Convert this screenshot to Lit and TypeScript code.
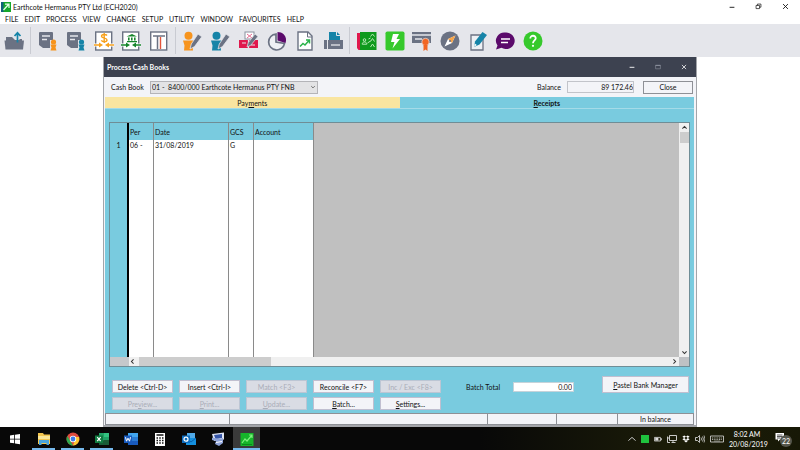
import { LitElement, html, css, svg, nothing, TemplateResult } from "lit";
import { customElement, property } from "lit/decorators.js";
import { classMap } from "lit/directives/class-map.js";

const doc = svg`<path d="M1.500 1h12.500q1 0 1 1v15H5l-4-3V2z" fill="#6b7283"/><path d="M4 5h8M4 8.500h5" stroke="#e5e6eb" stroke-width="1.400"/>`;
const person = (x: number, y: number, c: string) => svg`
  <circle cx=${x} cy=${y} r="2.600" fill=${c}/><path d="M${x - 3} ${y + 2.5}h6l-1 3 1 3h-6l1-3z" fill=${c}/>`;
const editor = (c: string) => svg`
  <circle cx="5.500" cy="4.800" r="4" fill=${c}/><path d="M0 9.500h11l-1.500 5 .5 5H1l.5-5z" fill=${c}/>
  <path d="M7 18l1.300-5L15 3l3.800 2.800-7.300 9.800z" fill="#6b7283" stroke="#e5e6eb" stroke-width=".8"/>`;
const sheet = svg`<rect x="1.700" y="1" width="16" height="18" fill="#fff" stroke="#6b7283" stroke-width="1.400"/>`;
const arrows = (c: string) => svg`<path d="M0 12.500h20v3H0z" fill="#fff"/><path d="M0 14h6M14 14h6" stroke=${c} stroke-width="1.600"/>
  <path d="M5 11.500l4 2.500-4 2.500zM15 11.500l-4 2.500 4 2.500z" fill=${c}/>`;

const icons: Record<string, TemplateResult> = {
  open: svg`<path d="M2 6h6l2 2h8v3H2z" fill="#6b7283"/><path d="M10.500 6h5v3h-5z" fill="#e5e6eb"/><path d="M.5 9.500h19.500l-1 9H1.500z" fill="#6b7283"/><path d="M13.500 11.500V3M10.500 5l3-3.200 3 3.200" fill="none" stroke="#1684a8" stroke-width="1.700"/>`,
  customerDoc: svg`${doc}<path d="M12 9h8v10h-8z" fill="#e5e6eb"/>${person(15.5, 11, "#f7941d")}`,
  supplierDoc: svg`${doc}<path d="M12 9h8v10h-8z" fill="#e5e6eb"/>${person(15.5, 11, "#1684a8")}`,
  cash: svg`${sheet}${arrows("#f7a11d")}<path d="M13 4.500C12 3 7.500 3 7.500 5.300s5.500 1.400 5.500 3.700-4.500 2.200-5.700.4M10.200 2v10" fill="none" stroke="#f7a11d" stroke-width="1.400"/>`,
  bank: svg`${sheet}${arrows("#16852b")}<path d="M5.500 5.600L11 3l5 2.600zM7 6.500h1.600v3H7zM10 6.500h1.600v3H10zM13 6.500h1.600v3H13zM6 10h10v1.300H6z" fill="#16852b"/>`,
  ledger: svg`${sheet}<path d="M4 5h12M8.500 5v13" stroke="#6b7283" stroke-width="1.500"/><path d="M11.500 6v12" stroke="#e4543a" stroke-width="1.400"/>`,
  customerEdit: editor("#f7941d"),
  supplierEdit: editor("#1684a8"),
  stockEdit: svg`<rect x="6" y="1" width="9" height="7" fill="#fff" stroke="#8c91a0"/><path d="M8 3l5 4M13 3L8 7" stroke="#e86a91" stroke-width="1"/><path d="M0 9h19v8H0z" fill="#e0184d"/><path d="M9.500 9v8M3 12h4M12 14h4" stroke="#e5e6eb" stroke-width="1.200"/><path d="M8 16l1.300-4.400L16 3l3 2.400-7.200 8.800z" fill="#6b7283" stroke="#e5e6eb" stroke-width=".7"/>`,
  pie: svg`<path d="M9 3a8 8 0 1 0 8.500 9.500L9 11z" fill="#eef0f4" stroke="#6b7283" stroke-width="1.700"/><path d="M10.500 1v8.500l8 2.500C20.500 6 16.500 1 10.500 1z" fill="#5b0a6b"/>`,
  report: svg`<path d="M3 1h10l4 4v14H3z" fill="#fff" stroke="#6b7283" stroke-width="1.400"/><path d="M12.500 1v5H17" fill="none" stroke="#6b7283"/><path d="M5 15.500l3-3 2 1.500 4-4.500M11 9h3.500v3.500" fill="none" stroke="#2ab34a" stroke-width="1.500"/>`,
  print: svg`<path d="M6 1h8l3 3v6H6z" fill="#1684a8"/><path d="M13.500 1v3.500H17" fill="none" stroke="#e5e6eb"/><path d="M1 9h3v9H1zM5 9h15v9H5z" fill="#6b7283"/><path d="M8 14h9" stroke="#e5e6eb" stroke-width="1.300"/>`,
  contacts: svg`<path d="M0 2h4v17H1.500L0 17z" fill="#e0184d"/><path d="M3 1h16.500v18H3z" fill="#0f9a1e"/><g fill="none" stroke="#b6e8b5"><circle cx="7.500" cy="9" r="1.300"/><path d="M5.200 13.200c0-3 4.600-3 4.600 0zM10.500 12l3-2M13.500 5.500l2-2.500 2 2.500M13.500 10.500l2-3 2 3M13.500 16l2-3 2 3M11.500 8l2-1"/></g>`,
  bolt: svg`<rect x=".5" y=".5" width="19" height="19" rx="1.800" fill="#36c92c"/><path d="M8 3h6l-2.500 5H15L7.500 17.500 9.500 11H6z" fill="#fff"/>`,
  licence: svg`<path d="M0 1h19v11H0z" fill="#6b7283"/><path d="M0 4h19M3 8h7" stroke="#e5e6eb" stroke-width="1.300"/><circle cx="13.500" cy="11" r="3.700" fill="#f26522" stroke="#e5e6eb" stroke-width=".7"/><path d="M11.500 14h4v6l-2-1.500-2 1.500z" fill="#f26522"/>`,
  compass: svg`<circle cx="10" cy="10" r="9.500" fill="#6b7283"/><path d="M15.500 4.500L12 12l-7.500 3.500L8 8z" fill="#fff"/><path d="M15.500 4.500L12 12 8 8z" fill="#f7a54a"/><circle cx="10" cy="10" r="1.100" fill="#6b7283"/>`,
  note: svg`<path d="M3 4h12v15H3z" fill="#eef0f4" stroke="#6b7283" stroke-width="1.300"/><path d="M6 16l1-5.500L14.500 1 19 4l-7.500 9.500z" fill="#1684a8"/><path d="M6 16l.8-3.500 2 1.600z" fill="#fff"/>`,
  chat: svg`<path d="M10.500 1.500a8.600 8.300 0 1 1-4 15.300L1 18.500l1.500-4A8.500 8.300 0 0 1 10.500 1.500z" fill="#5b0a6b"/><path d="M6 8h9M6 11.500h7" stroke="#fff" stroke-width="1.300"/>`,
  help: svg`<circle cx="10" cy="10" r="9.500" fill="#36c92c"/><path d="M7.300 7.500c0-3.800 5.700-3.500 5.400 0-.2 2-2.700 2-2.700 4.700" fill="none" stroke="#fff" stroke-width="1.800"/><circle cx="10" cy="14.800" r="1.100" fill="#fff"/>`,

  windows: svg`<path d="M5 6.500l4.200-.7v3.900H5zM10 5.700l5-.8v4.800h-5zM5 10.400h4.200v3.900L5 13.700zM10 10.400h5v4.800l-5-.8z" fill="#fff"/>`,
  folder: svg`<path d="M4 4h5l1 1.500h6V15H4z" fill="#f3c64f"/><path d="M4 7h12v3H4z" fill="#fbe79a"/><path d="M5 11h10v5h-2.500v-2h-5v2H5z" fill="#4aa5dc"/>`,
  chrome: svg`<circle cx="10" cy="10" r="6.500" fill="#dd4b3e"/><path d="M4.300 7L10 16.500A6.500 6.500 0 0 1 4.300 7z" fill="#2da94f"/><path d="M10 16.500L13 8h3a6.500 6.500 0 0 1-6 8.500z" fill="#fcc934"/><circle cx="10" cy="10" r="3.200" fill="#fff"/><circle cx="10" cy="10" r="2.400" fill="#3f7de8"/>`,
  excel: svg`<path d="M7 4h10v12H7z" fill="#21a366"/><path d="M12 4h5v4h-5z" fill="#33c481"/><path d="M12 11h5v5H7v-2z" fill="#185c37"/><path d="M3 6.500h8v7.500H3z" fill="#107c41"/><path d="M5.200 8.200l3.500 4M8.700 8.200l-3.500 4" stroke="#fff" stroke-width="1.200"/>`,
  word: svg`<path d="M7 4h10v12H7z" fill="#2b7cd3"/><path d="M7 4h10v4H7z" fill="#41a5ee"/><path d="M7 12h10v4H7z" fill="#185abd"/><path d="M3 6.500h8v7.500H3z" fill="#185abd"/><path d="M4.500 8.200l1 4 1.500-3 1.500 3 1-4" fill="none" stroke="#fff"/>`,
  calc: svg`<path d="M5 4h10v13H5z" fill="#fff"/><path d="M6.500 6h7" stroke="#111" stroke-width="1.500"/><path d="M6.500 9h7M6.500 11.500h7M6.500 14h7" stroke="#111" stroke-width="1.300" stroke-dasharray="1.500 1.250"/>`,
  outlook: svg`<path d="M8 4h8v6H8z" fill="#50a9e8"/><path d="M7 9h10v7H7z" fill="#1490df"/><path d="M7 9l5 4 5-4" fill="none" stroke="#0a5ea8"/><path d="M3 6.500h8v7.500H3z" fill="#0f6cbd"/><circle cx="7" cy="10.200" r="2" fill="none" stroke="#fff" stroke-width="1.200"/>`,
  remote: svg`<path d="M4 5l12-1.500v7L6 12z" fill="#dfe5f3"/><path d="M6 6l8-1v4L7.500 10z" fill="#3555a8"/><path d="M4 8.500l7 1.500 4-1v5l-4 3-4-2 1-3-4-1z" fill="#8fa4d8"/><path d="M8 13.500l6-1" stroke="#fff"/>`,
  pastel: svg`<path d="M3.500 4h13v13h-13z" fill="#16b52a"/><path d="M5 14l3-4 2 2 5-6M12 6h3v3" fill="none" stroke="#7cf07b" stroke-width="1.200"/><path d="M5 15.500h10" stroke="#0b8a1b"/>`,

  logo: svg`<path d="M0 0h20v20H0z" fill="#17a82b"/><path d="M0 0h5v20H0z" fill="#12617c"/><path d="M5 16L15 5M8 4h8v8" fill="none" stroke="#e6ffe6" stroke-width="2.500"/>`,
  min: svg`<path d="M2 11h16" stroke="currentColor" stroke-width="3"/>`,
  restore: svg`<path d="M3 7h10v9H3zM7 7V3h10v9h-4" fill="none" stroke="currentColor" stroke-width="2"/>`,
  max: svg`<path d="M2 4h16v12H2z" fill="none" stroke="currentColor" stroke-width="2"/><path d="M2 5h16" stroke="currentColor" stroke-width="3"/>`,
  close: svg`<path d="M3 3l14 14M17 3L3 17" stroke="currentColor" stroke-width="2.500"/>`,
  up: svg`<path d="M4 13l6-6 6 6" fill="none" stroke="currentColor" stroke-width="3"/>`,
  down: svg`<path d="M4 7l6 6 6-6" fill="none" stroke="currentColor" stroke-width="3"/>`,
  left: svg`<path d="M13 4l-6 6 6 6" fill="none" stroke="currentColor" stroke-width="3"/>`,
  right: svg`<path d="M7 4l6 6-6 6" fill="none" stroke="currentColor" stroke-width="3"/>`,
  chevron: svg`<path d="M1 14l9-8 9 8" fill="none" stroke="#ddd" stroke-width="2.200"/>`,
  square: svg`<path d="M0 0h20v20H0z" fill="#1fc23e"/>`,
  battery: svg`<path d="M1 6h15v9H1zM17 9h2v3h-2" fill="none" stroke="#ddd" stroke-width="2"/><path d="M3 7h8v7H3z" fill="#ddd"/>`,
  network: svg`<path d="M5 3h14v10H5zM9 17h8M12 13v4M1 5v12h5M1 8h4" fill="none" stroke="#ddd" stroke-width="1.800"/>`,
  dropbox: svg`<path d="M5.500 1L10 4 5.500 7.500 1 4.300zM14.500 1L19 4.300l-4.500 3.200L10 4zM1 10.500l4.500-3L10 11l-4.500 3zM19 10.500l-4.500-3L10 11l4.500 3zM5.500 15.300L10 12.500l4.500 2.800L10 19z" fill="#fff"/>`,
  sound: svg`<path d="M1 7h4l4-4v14l-4-4H1z" fill="none" stroke="#ddd" stroke-width="1.700"/><path d="M12 7q2 3 0 6M15 5q3.500 5 0 10M18 3q4 7 0 14" fill="none" stroke="#ddd" stroke-width="1.500"/>`,
  keyboard: svg`<path d="M1 4h26v12H1z" fill="none" stroke="#ddd" stroke-width="1.600"/><path d="M4 8h21M4 11h21" stroke="#ddd" stroke-width="1.500" stroke-dasharray="2 1.500"/><path d="M8 14h12" stroke="#ddd"/>`,
  notice: svg`<path d="M1 2h17v13h-8l-4 4v-4H1z" fill="#fff"/><path d="M4 6h11M4 9h11M4 12h7" stroke="#222" stroke-width="1.500"/>`,
};

@customElement("ui-icon")
class UiIcon extends LitElement {
  static styles = css`
    :host { display: block; flex: none; width: 20px; height: 20px; }
    svg { display: block; width: 100%; height: 100%; }
  `;
  @property() name = "";
  @property() box = "0 0 20 20";
  render() {
    return html`<svg viewBox=${this.box} aria-hidden="true">${icons[this.name]}</svg>`;
  }
}

const menus = ["FILE", "EDIT", "PROCESS", "VIEW", "CHANGE", "SETUP", "UTILITY", "WINDOW", "FAVOURITES", "HELP"];
const toolGroups = [
  { size: "one", tools: ["open"] },
  { size: "five", tools: ["customerDoc", "supplierDoc", "cash", "bank", "ledger"] },
  { size: "six", tools: ["customerEdit", "supplierEdit", "stockEdit", "pie", "report", "print"] },
  { size: "seven", tools: ["contacts", "bolt", "licence", "compass", "note", "chat", "help"] },
];
const tasks: [string, string][] = [
  ["windows", ""], ["folder", "running"], ["chrome", "running"], ["excel", "running"], ["word", ""],
  ["calc", ""], ["outlook", ""], ["remote", ""], ["pastel", "running active"],
];
const actions: { label: unknown; off?: boolean }[] = [
  { label: "Delete <Ctrl-D>" },
  { label: "Insert <Ctrl-I>" },
  { label: "Match <F3>", off: true },
  { label: "Reconcile <F7>" },
  { label: "Inc / Exc <F8>", off: true },
  { label: html`Pre<u>v</u>iew...`, off: true },
  { label: html`<u>P</u>rint...`, off: true },
  { label: html`<u>U</u>pdate...`, off: true },
  { label: html`<u>B</u>atch...` },
  { label: html`<u>S</u>ettings...` },
];

@customElement("app-root")
class AppRoot extends LitElement {
  static styles = css`
    * { box-sizing: border-box; }
    :host {
      display: flex; flex-direction: column; min-height: 100vh; background: #fff;
      font: 7px/10px Lato, "Open Sans", sans-serif; color: #111;
    }
    button, input, select { font: inherit; color: inherit; margin: 0; padding: 0; border: 0; border-radius: 0; background: none; }
    button { white-space: nowrap; }
    u { text-underline-offset: 1px; }
    .titlebar { display: flex; align-items: center; height: 13px; padding: 0 11px 0 1px; }
    .titlebar h1 { flex: 1; margin: 0 0 0 2px; font: inherit; }
    .s10 { width: 10px; height: 10px; }
    .s8 { width: 8px; height: 8px; }
    .s7 { width: 7px; height: 7px; }
    .s6 { width: 6px; height: 6px; }
    .controls { display: flex; gap: 20px; }
    .menu { display: flex; gap: 6px; height: 11px; padding: 0 5px; align-items: center; }
    .toolbar { display: flex; height: 33px; padding: 0 4px; align-items: center; background: #e5e6eb; }
    .group { display: flex; justify-content: space-between; }
    .five { width: 131px; }
    .six { width: 160px; }
    .seven { width: 186px; }
    .sep { width: 1px; height: 27px; margin: 0 7px 0 6px; background: #c9cbd2; }

    .desk { flex: 1; display: flex; padding: 0 103px; }
    .window {
      flex: 1; min-width: 0; display: flex; flex-direction: column; background: #f3f4f8;
      border: solid #a3a5aa; border-width: 0 1px 2px;
    }
    .caption { display: flex; align-items: center; height: 20px; padding: 0 9px 0 3px; background: #3d4250; color: #fff; }
    .caption h2 { flex: 1; margin: 0; font: inherit; font-weight: 700; }
    .dim { color: #8b909c; }
    .book { display: flex; align-items: center; height: 20px; padding: 0 3px 0 7px; }
    .book > label:first-child { width: 39px; }
    .pick { display: grid; width: 168px; align-items: center; }
    .pick > * { grid-area: 1 / 1; }
    .pick select { appearance: none; width: 100%; height: 13px; padding: 0 1px; background: #e3e3e5; border: 1px solid #b4b4b8; }
    .pick ui-icon { justify-self: end; margin-right: 2px; color: #666; pointer-events: none; }
    .balance { margin-left: auto; display: flex; align-items: center; gap: 6px; }
    .balance input { width: 67px; height: 12px; padding: 0; text-align: right; border: 1px solid #c2c4ca; }
    .close { width: 50px; height: 13px; margin-left: 9px; border: 1px solid #8e9096; }

    .body { flex: 1; display: flex; flex-direction: column; margin: 0 2px 0 1px; background: #79cbdf; }
    .tabs { display: flex; height: 12px; border-bottom: 1px solid #a5dbe8; }
    .tabs button { flex: 1; }
    .tabs .on { background: #f9e5a0; }
    .tabs .alt { font-weight: 700; }
    .sheet {
      flex: 1; display: grid; grid-template: minmax(0, 1fr) 9px / minmax(0, 1fr) 10px;
      margin: 13px 4px 0; border: 1px solid #6f8d96; background: #c0c0c0;
    }
    table { height: 100%; width: 204px; border-spacing: 0; table-layout: fixed; background: #fff; }
    th, td { padding: 0 1px; text-align: left; font-weight: 400; vertical-align: top; border-right: 1px solid #8a8a8a; }
    thead th { height: 17px; vertical-align: middle; background: #79cbdf; }
    .row { height: 12px; }
    th.num { text-align: center; background: #79cbdf; border-right: 2px solid #000; }
    .c-num { width: 19px; }
    .c-per { width: 25px; }
    .c-date { width: 75px; }
    .c-gcs { width: 25px; }
    .vbar, .hbar { display: flex; align-items: center; background: #f0f0f0; color: #333; }
    .vbar { flex-direction: column; padding: 1px 0; }
    .vbar .thumb { width: 9px; height: 11px; margin: 1px 0 auto; background: #cdcdcd; }
    .stub { width: 19px; height: 9px; background: #c6c8cb; }
    .hbar .thumb { width: 132px; height: 9px; margin: 0 auto 0 2px; background: #cdcdcd; }
    .hbar .s7 { margin-right: 1px; }
    .corner { background: #bfc1c4; }

    .foot { display: flex; align-items: flex-start; padding: 9px 5px 3px 7px; }
    .actions { display: grid; grid-template-columns: repeat(5, 61px); gap: 4px 6px; padding-top: 4px; }
    .foot button { height: 13px; background: #f3f4f8; border: 1px solid #c0bfd0; }
    .foot button:disabled { background: #d9dce4; border-color: #bcc6d4; color: #a9adb8; }
    .total { display: flex; align-items: center; justify-content: space-between; width: 108px; margin: 6px 0 0 25px; }
    .total input { width: 61px; height: 10px; padding: 0 1px; background: #fff; text-align: right; border: 1px solid #c5d3da; }
    .foot .bank { width: 87px; height: 17px; margin-left: auto; }
    .status { display: grid; grid-template-columns: 124px 1fr 69px 61px 76px; height: 12px; margin: 0 2px 0 1px; border: 1px solid #8d9096; border-left: 0; }
    .status span { text-align: center; border-left: 1px solid #8d9096; }

    .taskbar { display: flex; height: 23px; background: linear-gradient(90deg, #080808 60%, #1c1d08 85%, #171806); color: #fff; }
    .task { display: flex; justify-content: center; align-items: center; width: 23px; margin: 0 3px; border-bottom: 2px solid transparent; border-top: 2px solid transparent; }
    .running { border-bottom-color: #76b9ed; }
    .active { width: 27px; margin: 0 1px; background: #3a3a3a; border-top-color: #3a3a3a; }
    .tray { display: flex; align-items: center; gap: 5px; margin-left: auto; }
    .kb { width: 14px; height: 10px; }
    .clock { width: 36px; text-align: center; }
    .notes { display: grid; width: 17px; height: 17px; margin: 0 8px 0 5px; }
    .notes > * { grid-area: 1 / 1; }
    .notes .s10 { margin-top: 2px; }
    .count { place-self: end; width: 12px; height: 12px; border-radius: 6px; background: #55564c; text-align: center; line-height: 12px; }
  `;

  private icon(name: string, size = "") {
    return html`<ui-icon class=${size} name=${name}></ui-icon>`;
  }

  render() {
    return html`
      <header class="titlebar">
        ${this.icon("logo", "s10")}
        <h1>Earthcote Hermanus PTY Ltd (ECH2020)</h1>
        <div class="controls">
          <button aria-label="Minimise">${this.icon("min", "s6")}</button>
          <button aria-label="Restore">${this.icon("restore", "s7")}</button>
          <button aria-label="Close application">${this.icon("close", "s7")}</button>
        </div>
      </header>
      <nav class="menu">${menus.map((m) => html`<button>${m}</button>`)}</nav>
      <div class="toolbar">
        ${toolGroups.map((g, i) => html`
          ${i ? html`<span class="sep"></span>` : nothing}
          <div class="group ${g.size}">${g.tools.map((t) => html`<button aria-label=${t}>${this.icon(t)}</button>`)}</div>`)}
      </div>
      <main class="desk">
        <section class="window">
          <div class="caption">
            <h2>Process Cash Books</h2>
            <div class="controls">
              <button aria-label="Minimise window">${this.icon("min", "s6")}</button>
              <button class="dim" aria-label="Maximise window">${this.icon("max", "s6")}</button>
              <button aria-label="Close window">${this.icon("close", "s6")}</button>
            </div>
          </div>
          <div class="book">
            <label for="book">Cash Book</label>
            <div class="pick">
              <select id="book"><option>01 -&nbsp; 8400/000 Earthcote Hermanus PTY FNB</option></select>
              ${this.icon("down", "s6")}
            </div>
            <label class="balance">Balance <input readonly value="89 172.46"></label>
            <button class="close">Close</button>
          </div>
          <div class="body">
            <div class="tabs" role="tablist">
              <button class="on" role="tab">Pay<u>m</u>ents</button>
              <button class="alt" role="tab"><u>R</u>eceipts</button>
            </div>
            <div class="sheet">
              <table>
                <colgroup><col class="c-num"><col class="c-per"><col class="c-date"><col class="c-gcs"><col></colgroup>
                <thead><tr><th class="num"></th><th>Per</th><th>Date</th><th>GCS</th><th>Account</th></tr></thead>
                <tbody>
                  <tr class="row"><th class="num">1</th><td>06 -</td><td>31/08/2019</td><td>G</td><td></td></tr>
                  <tr><th class="num"></th><td></td><td></td><td></td><td></td></tr>
                </tbody>
              </table>
              <div class="vbar">${this.icon("up", "s7")}<span class="thumb"></span>${this.icon("down", "s7")}</div>
              <div class="hbar"><span class="stub"></span>${this.icon("left", "s7")}<span class="thumb"></span>${this.icon("right", "s7")}</div>
              <div class="corner"></div>
            </div>
            <div class="foot">
              <div class="actions">
                ${actions.map((a) => html`<button ?disabled=${a.off}>${a.label}</button>`)}
              </div>
              <label class="total">Batch Total <input value="0.00"></label>
              <button class="bank"><u>P</u>astel Bank Manager</button>
            </div>
          </div>
          <div class="status"><span></span><span></span><span></span><span></span><span>In balance</span></div>
        </section>
      </main>
      <footer class="taskbar">
        ${tasks.map(([name, state]) => html`
          <button aria-label=${name} class=${classMap({ task: true, running: state.includes("running"), active: state.includes("active") })}>
            ${this.icon(name)}
          </button>`)}
        <div class="tray">
          ${this.icon("chevron", "s8")}${this.icon("square", "s8")}${this.icon("battery", "s8")}
          ${this.icon("network", "s10")}${this.icon("dropbox", "s8")}${this.icon("sound", "s10")}
          <ui-icon class="kb" name="keyboard" box="0 0 28 20"></ui-icon>
          <div class="clock">8:02 AM<br>20/08/2019</div>
          <div class="notes">${this.icon("notice", "s10")}<span class="count">22</span></div>
        </div>
      </footer>
    `;
  }
}
